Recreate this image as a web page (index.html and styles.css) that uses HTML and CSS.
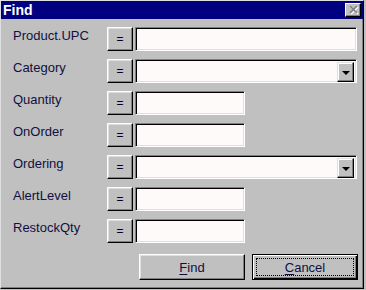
FILE: index.html
```html
<!DOCTYPE html>
<html>
<head>
    <meta charset="UTF-8" />
    <title>Find</title>
    <link rel="stylesheet" href="styles.css">
</head>
<body>
<div class="window">
    <div class="titlebar">
        <span class="title">Find</span>
        <span class="close">
            <svg width="10" height="9" viewBox="0 0 10 9">
                <path d="M2 1 L9 8 M9 1 L2 8" stroke="#fff" stroke-width="1.6" fill="none" />
                <path d="M1 0 L8 7 M8 0 L1 7" stroke="#808080" stroke-width="1.6" fill="none" />
            </svg>
        </span>
    </div>

    <div class="form">
        <div class="label">Product.UPC</div>
        <div class="op">=</div>
        <div class="text wide"></div>

        <div class="label">Category</div>
        <div class="op">=</div>
        <div class="text wide combo"><span class="combo-btn"><span class="arrow"></span></span></div>

        <div class="label">Quantity</div>
        <div class="op">=</div>
        <div class="text short"></div>

        <div class="label">OnOrder</div>
        <div class="op">=</div>
        <div class="text short"></div>

        <div class="label">Ordering</div>
        <div class="op">=</div>
        <div class="text wide combo"><span class="combo-btn"><span class="arrow"></span></span></div>

        <div class="label">AlertLevel</div>
        <div class="op">=</div>
        <div class="text short"></div>

        <div class="label">RestockQty</div>
        <div class="op">=</div>
        <div class="text short"></div>
    </div>

    <div class="actions">
        <div class="btn"><span class="btn-face"><u>F</u>ind</span></div>
        <div class="btn default"><span class="btn-face focus"><u>C</u>ancel</span></div>
    </div>
</div>
</body>
</html>
```

FILE: styles.css
```css
* {
    box-sizing : border-box;
    margin : 0px;
    padding : 0px;
}

body {
    background : #c0c0c0;
    font-family : "Liberation Sans", Arial, Helvetica, sans-serif;
    font-size : 13px;
    color : #101040;
}

.window {
    width : 364px;
    height : 289px;
    background : #c0c0c0;
    border : 1px solid;
    border-color : #dfdfdf #000 #000 #dfdfdf;
    box-shadow : inset -1px -1px #808080;
}

.titlebar {
    height : 18px;
    background : #000080;
    color : #fff;
    display : flex;
    align-items : center;
    justify-content : space-between;
    padding : 0 2px 0 2px;
}

.title {
    font-weight : bold;
    font-size : 14px;
    line-height : 18px;
}

.close {
    width : 16px;
    height : 14px;
    background : #c0c0c0;
    border : 1px solid;
    border-color : #fff #000 #000 #fff;
    box-shadow : inset -1px -1px #808080;
    display : flex;
    align-items : center;
    justify-content : center;
    padding-left : 1px;
}

.close svg { display : block; }

.form {
    display : grid;
    grid-template-columns : 94px 26px auto;
    row-gap : 8px;
    padding : 8px 5px 0 12px;
    align-items : start;
}

.label {
    line-height : 16px;
    padding-top : 1px;
    white-space : nowrap;
}

.op {
    height : 24px;
    border : 1px solid;
    border-color : #fff #000 #000 #fff;
    box-shadow : inset -1px -1px #808080, inset 1px 1px #dfdfdf;
    display : flex;
    align-items : center;
    justify-content : center;
    font-size : 12px;
    color : #000030;
}

.text {
    height : 24px;
    margin-left : 2px;
    background : #fffafa;
    border : 1px solid;
    border-color : #808080 #fff #fff #808080;
    box-shadow : inset 1px 1px #000, inset -1px -1px #dfdfdf;
}

.wide { width : 222px; }

.short { width : 110px; }

.combo {
    display : flex;
    justify-content : flex-end;
    padding : 2px;
}

.combo-btn {
    width : 17px;
    height : 20px;
    background : #c0c0c0;
    border : 1px solid;
    border-color : #dfdfdf #000 #000 #dfdfdf;
    box-shadow : inset -1px -1px #808080, inset 1px 1px #fff;
    display : flex;
    align-items : center;
    justify-content : center;
}

.arrow {
    width : 0;
    height : 0;
    border-left : 4px solid transparent;
    border-right : 4px solid transparent;
    border-top : 4px solid #000;
    margin-top : 1px;
}

.actions {
    display : flex;
    justify-content : flex-end;
    gap : 7px;
    padding-right : 5px;
    margin-top : 11px;
}

.btn {
    width : 106px;
    height : 26px;
    border : 1px solid;
    border-color : #fff #000 #000 #fff;
    box-shadow : inset -1px -1px #808080, inset 1px 1px #dfdfdf;
    display : flex;
    padding : 3px;
}

.btn.default {
    border-color : #000;
    box-shadow : inset 1px 1px #fff, inset -1px -1px #000, inset -2px -2px #808080;
}

.btn-face {
    flex : 1;
    display : flex;
    align-items : center;
    justify-content : center;
    font-size : 13px;
    color : #101040;
    border : 1px solid transparent;
}

.btn-face.focus { border : 1px dotted #000; }

.btn-face u { text-decoration-thickness : 1px; text-underline-offset : 2px; }
```
